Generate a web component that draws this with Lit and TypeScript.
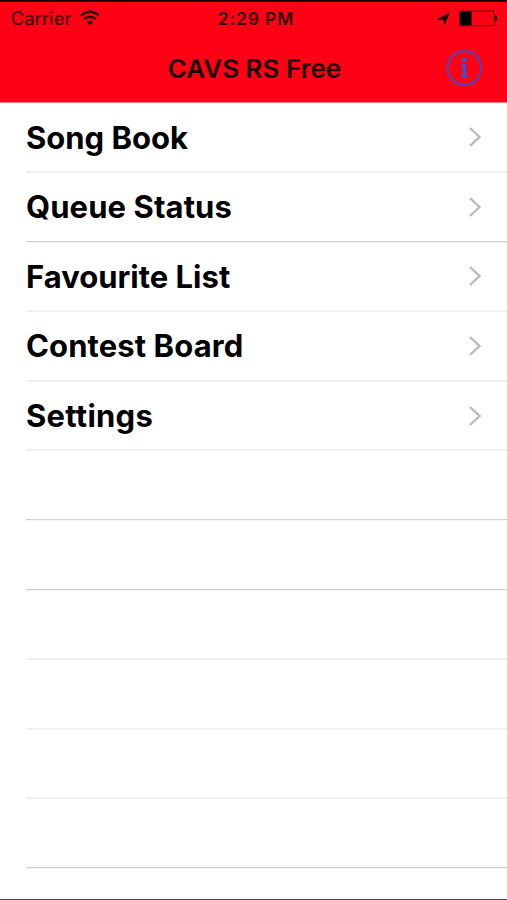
import { LitElement, html, css } from "lit";
import { customElement } from "lit/decorators.js";
import { classMap } from "lit/directives/class-map.js";
import { styleMap } from "lit/directives/style-map.js";

interface Row {
  label?: string;
  height: number;
  spacing?: number;
  strong?: boolean;
}

const rows: Row[] = [
  { label: "Song Book", height: 70, spacing: 0 },
  { label: "Queue Status", height: 69, spacing: 0.1, strong: true },
  { label: "Favourite List", height: 70, spacing: 0 },
  { label: "Contest Board", height: 70, spacing: 0.1 },
  { label: "Settings", height: 69, spacing: 0.25 },
  { height: 69, strong: true },
  { height: 70, strong: true },
  { height: 70 },
  { height: 70 },
  { height: 69 },
  { height: 69, strong: true },
];

@customElement("app-root")
export class AppRoot extends LitElement {
  static styles = css`
    :host {
      display: flex;
      flex-direction: column;
      box-sizing: border-box;
      width: 100%;
      height: 900px;
      overflow: hidden;
      background: #fff;
      border-bottom: 1px solid #4a4a4a;
      font-family: Inter, "Liberation Sans", sans-serif;
      color: #000;
    }
    svg { display: block; flex: none; }
    header {
      flex: none;
      height: 103px;
      box-sizing: border-box;
      background: #ff0015;
      border-top: 2px solid #180002;
      border-bottom: 1px solid #ff7a84;
    }
    .bar {
      display: grid;
      grid-template-columns: 1fr auto 1fr;
      align-items: center;
    }
    .status { height: 33px; padding: 0 9px 0 11px; color: #350004; }
    .left { display: flex; align-items: center; gap: 8px; }
    .carrier { font-size: 18px; letter-spacing: 0.25px; -webkit-text-stroke: 0.2px #350004; }
    .wifi { margin-bottom: 2px; }
    .time { font-size: 17.5px; font-weight: 600; letter-spacing: 0.85px; margin-left: 3px; }
    .right { display: flex; align-items: center; justify-content: flex-end; gap: 9px; }
    .nav { height: 67px; padding: 0 25px 0 25px; }
    .title {
      grid-column: 2;
      font-size: 26px;
      font-weight: 600;
      line-height: 64px;
      margin-left: 2px;
      color: #1a0002;
    }
    .info { justify-self: end; margin-bottom: 2px; }
    .row {
      display: flex;
      box-sizing: border-box;
      align-items: center;
      justify-content: space-between;
      margin-left: 26px;
      padding-right: 25px;
      border-bottom: 2px solid #f0f0f1;
    }
    .row.strong {
      border-bottom: 1px solid #d0d0d2;
      box-shadow: 0 1px 0 #f4f4f4;
    }
    .label { font-size: 31px; font-weight: 700; line-height: 40px; white-space: nowrap; }
    .row:nth-child(1) .label, .row:nth-child(3) .label { padding-top: 1px; }
  `;

  private renderRow(row: Row) {
    return html`<div
      class=${classMap({ row: true, strong: !!row.strong })}
      style=${styleMap({ height: `${row.height}px` })}
    >
      ${row.label
        ? html`<span class="label" style=${styleMap({ letterSpacing: `${row.spacing ?? 0}px` })}>${row.label}</span>
            <svg width="14" height="22" viewBox="0 0 14 22" fill="none" stroke="#b9b9bd" stroke-width="2.4">
              <path d="M2 2 L11.5 11 L2 20" />
            </svg>`
        : null}
    </div>`;
  }

  render() {
    return html`
      <header>
        <div class="bar status">
          <div class="left">
            <span class="carrier">Carrier</span>
            <svg class="wifi" width="20" height="16" viewBox="0 0 20 16" fill="none" stroke="#2a0003" stroke-width="2.4">
              <path d="M1 5.4 Q10 -2 19 5.4" />
              <path d="M4.2 9.1 Q10 4.2 15.8 9.1" />
              <path d="M10 15.2 L6.8 12 Q10 8.9 13.2 12 Z" fill="#2a0003" stroke="none" />
            </svg>
          </div>
          <span class="time">2:29 PM</span>
          <div class="right">
            <svg width="14" height="14" viewBox="0 0 14 14" fill="#1c0002">
              <path d="M14 0.2 L8.6 13.8 L7.4 8.2 L0.8 7.2 Z" />
            </svg>
            <svg width="39" height="17" viewBox="0 0 39 17">
              <rect x="0.8" y="1" width="34.6" height="14.6" rx="2.2" fill="none" stroke="#6b0008" stroke-width="1.1" />
              <rect x="1" y="1.6" width="11.5" height="13.4" rx="1" fill="#000" />
              <path d="M36 5.2 Q38.4 6 38.4 8.3 Q38.4 10.6 36 11.4 Z" fill="#1c0002" />
            </svg>
          </div>
        </div>
        <div class="bar nav">
          <span class="title">CAVS RS Free</span>
          <svg class="info" width="36" height="36" viewBox="0 0 36 36" fill="#2e58d8">
            <circle cx="18.3" cy="18" r="16.8" fill="none" stroke="#5c40b0" stroke-width="2.2" />
            <circle cx="18.2" cy="10" r="2.4" />
            <path d="M15.2 14.2 H20.2 V26 H21.4 V27.8 H15 V26 H16.4 V16 H15.2 Z" />
          </svg>
        </div>
      </header>
      <main>${rows.map((row) => this.renderRow(row))}</main>
    `;
  }
}
